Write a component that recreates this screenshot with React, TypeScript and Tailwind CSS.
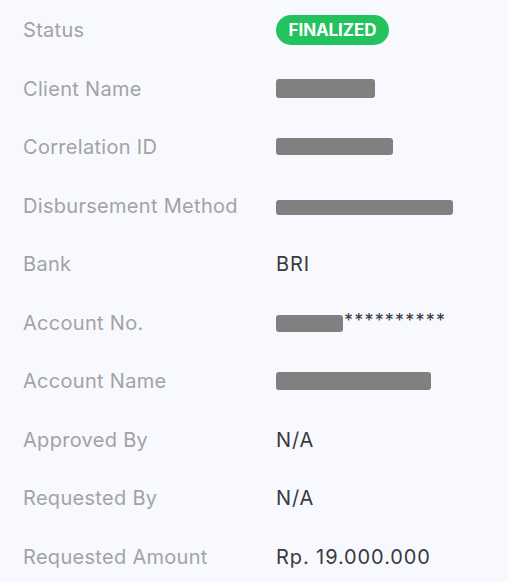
import React from "react";

type Row = { label: string; value: React.ReactNode };

function Redacted({ w, h = 18, dy = 0 }: { w: number; h?: number; dy?: number }) {
  return (
    <span
      className="inline-block rounded-[3px] bg-[#808080]"
      style={{ width: w, height: h, transform: `translateY(${dy}px)` }}
    />
  );
}

const rows: Row[] = [
  {
    label: "Status",
    value: (
      <span className="inline-flex h-[30px] w-[113px] items-center justify-center rounded-full bg-[#22c25e] text-[17px] font-bold tracking-[-0.1px] text-white">
        FINALIZED
      </span>
    ),
  },
  { label: "Client Name", value: <Redacted w={99} h={19} /> },
  { label: "Correlation ID", value: <Redacted w={117} h={17} dy={-1} /> },
  { label: "Disbursement Method", value: <Redacted w={177} h={15} dy={2} /> },
  { label: "Bank", value: "BRI" },
  {
    label: "Account No.",
    value: (
      <span className="inline-flex items-center">
        <Redacted w={67} h={17} dy={1} />
        <span className="ml-[1px] -translate-y-[2px] text-[18px] tracking-[1.2px]">**********</span>
      </span>
    ),
  },
  { label: "Account Name", value: <Redacted w={155} h={18} /> },
  { label: "Approved By", value: "N/A" },
  { label: "Requested By", value: "N/A" },
  { label: "Requested Amount", value: "Rp. 19.000.000" },
];

export default function App() {
  return (
    <div
      className="h-[582px] w-[508px] overflow-hidden bg-[#f8f9fe] pt-[1px]"
      style={{ fontFamily: "Inter, 'Noto Sans', sans-serif" }}
    >
      {rows.map((r) => (
        <div key={r.label} className="flex h-[58.5px] items-center">
          <div className="w-[276px] pl-[23px] text-[20px] tracking-[0.3px] text-[#a3a3a3]">{r.label}</div>
          <div className="flex items-center text-[20px] tracking-[0.9px] text-[#3a3a40]">{r.value}</div>
        </div>
      ))}
    </div>
  );
}
